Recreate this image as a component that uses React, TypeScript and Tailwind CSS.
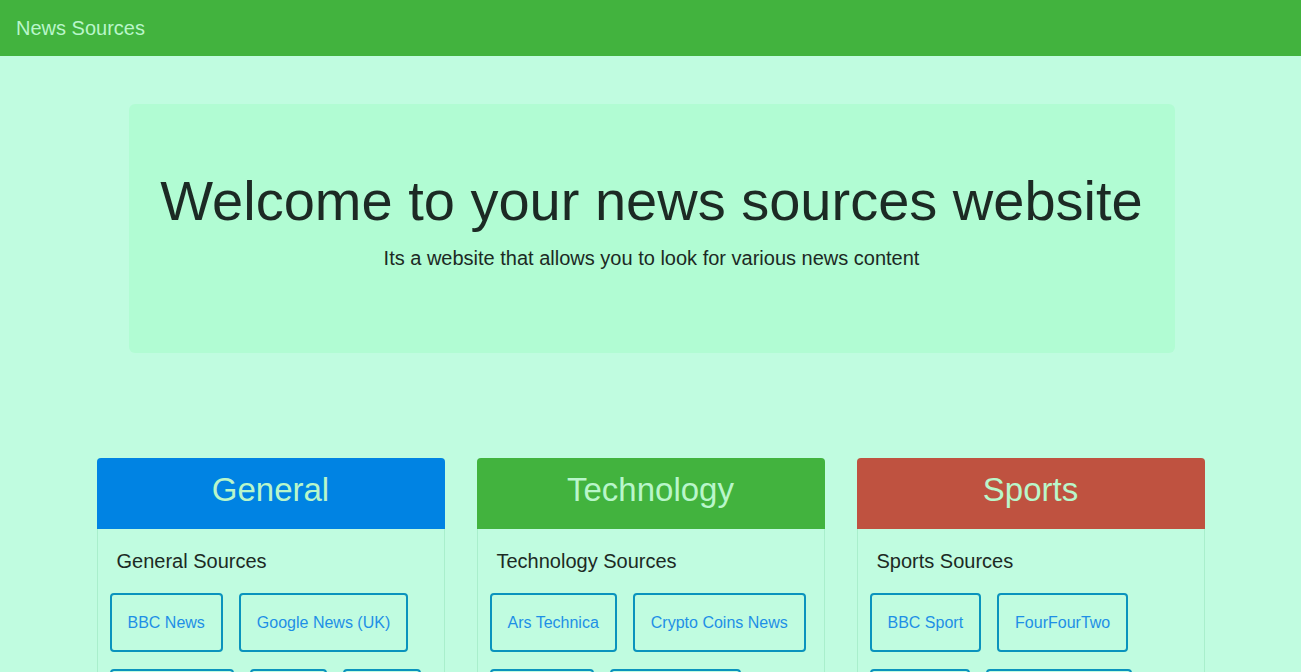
const categories = [
  {
    name: 'General',
    header: 'bg-[#0083e3]',
    sources: ['BBC News', 'Google News (UK)', 'Independent', 'Metro', 'Mirror'],
  },
  {
    name: 'Technology',
    header: 'bg-[#42b33e]',
    sources: ['Ars Technica', 'Crypto Coins News', 'Engadget', 'Hacker News'],
  },
  {
    name: 'Sports',
    header: 'bg-[#bf5240]',
    sources: ['BBC Sport', 'FourFourTwo', 'Talksport', 'The Sport Bible'],
  },
]

export default function App() {
  return (
    <div className="min-h-screen bg-[#c0fce0] font-['Liberation_Sans',Arial,sans-serif] text-[#1c2a24]">
      {/* navbar */}
      <nav className="h-14 bg-[#42b33e] flex items-center px-4">
        <span className="text-[20px] text-[#b9f6ca]">News Sources</span>
      </nav>

      {/* jumbotron */}
      <div className="pt-12 flex justify-center">
        <div className="w-[1046px] h-[249px] bg-[#b1fcd3] rounded-md flex flex-col items-center pt-[69px] translate-x-px">
          <h1 className="text-[56px] leading-none whitespace-nowrap">Welcome to your news sources website</h1>
          <p className="text-[20px] leading-7 mt-[15px]">Its a website that allows you to look for various news content</p>
        </div>
      </div>

      {/* category cards */}
      <div className="mt-[105px] flex justify-center gap-8">
        {categories.map((c) => (
          <div key={c.name} className="w-[348px] rounded-t border border-[#a9efcc] border-t-0">
            <div className={`${c.header} h-[71px] rounded-t flex items-center justify-center -mx-px`}>
              <span className="text-[33px] text-[#b9f6ca] -mt-[8px]">{c.name}</span>
            </div>
            <div className="px-[12px] pt-[17px] pb-4">
              <h3 className="text-[20px] px-[7px] mb-[17px]">{c.name} Sources</h3>
              <div className="flex flex-wrap gap-x-[16px] gap-y-[17px]">
                {c.sources.map((s) => (
                  <button
                    key={s}
                    className="h-[59px] px-[16px] border-2 border-[#0a93bd] rounded text-[16px] text-[#1e8fe6]"
                  >
                    {s}
                  </button>
                ))}
              </div>
            </div>
          </div>
        ))}
      </div>
    </div>
  )
}
